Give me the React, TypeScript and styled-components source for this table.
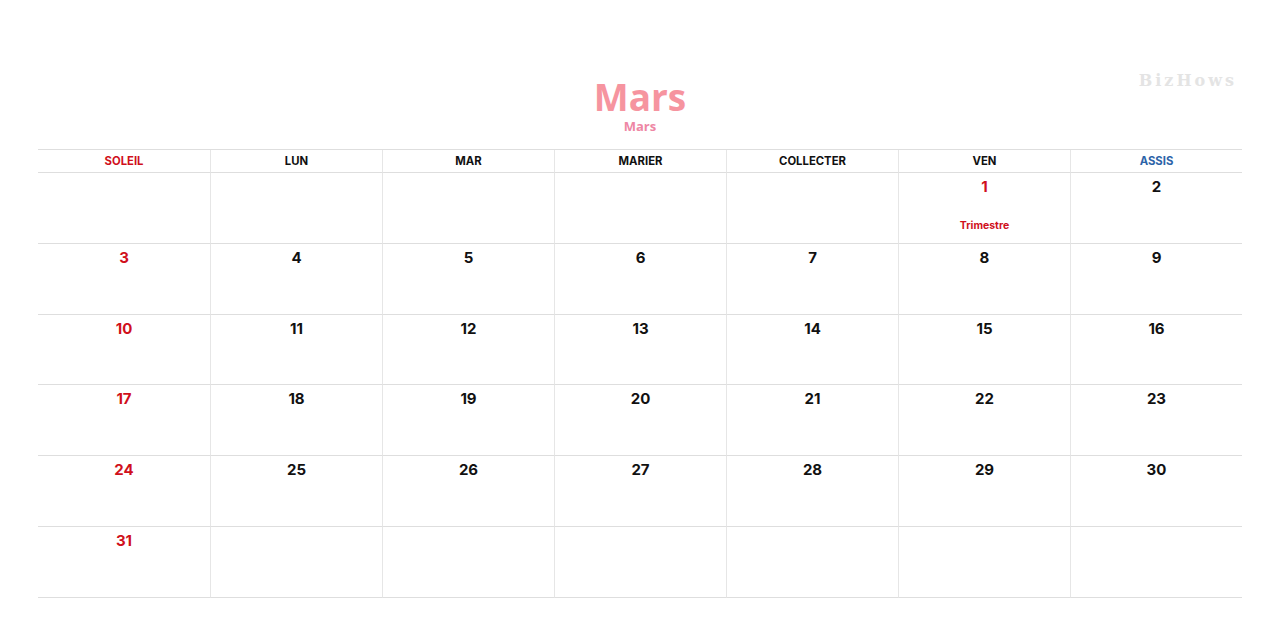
import React from 'react'
import styled, { createGlobalStyle } from 'styled-components'

const GlobalStyle = createGlobalStyle`
  body {
    margin: 0;
    background: #fff;
    font-family: 'Inter', 'Liberation Sans', sans-serif;
  }
`

const Page = styled.div`
  position: relative;
  width: 1280px;
  height: 627px;
  padding: 79px 38px 0;
  box-sizing: border-box;
`

const Watermark = styled.div`
  position: absolute;
  top: 71px;
  right: 43px;
  font-family: 'DejaVu Serif', serif;
  font-size: 16px;
  letter-spacing: 3px;
  color: #e4e4e4;
  font-weight: 700;
`

const Header = styled.div`
  display: flex;
  flex-direction: column;
  align-items: center;
  height: 70px;
`

const Title = styled.h1`
  margin: 0;
  font-family: 'Open Sans', sans-serif;
  font-size: 37px;
  line-height: 36px;
  font-weight: 700;
  color: #f6949f;
`

const Subtitle = styled.div`
  font-family: 'Open Sans', sans-serif;
  font-size: 13px;
  font-weight: 700;
  line-height: 16px;
  margin-top: 3px;
  color: #ee86a4;
`

const Grid = styled.div`
  display: grid;
  grid-template-columns: repeat(7, 1fr);
  border-top: 1px solid #dedede;
`

const HeadCell = styled.div<{ $color: string; $first: boolean }>`
  height: 23px;
  display: flex;
  align-items: center;
  justify-content: center;
  font-size: 11.3px;
  font-weight: 700;
  color: ${({ $color }) => $color};
  border-bottom: 1px solid #dedede;
  border-left: ${({ $first }) => ($first ? 'none' : '1px solid #e6e6e6')};
  box-sizing: border-box;
`

const DayCell = styled.div<{ $first: boolean }>`
  height: 70.8px;
  display: flex;
  flex-direction: column;
  align-items: center;
  padding-top: 5px;
  box-sizing: border-box;
  border-bottom: 1px solid #dedede;
  border-left: ${({ $first }) => ($first ? 'none' : '1px solid #e6e6e6')};
`

const DayNum = styled.div<{ $red: boolean }>`
  font-size: 15px;
  font-weight: 700;
  line-height: 18px;
  color: ${({ $red }) => ($red ? '#d0101c' : '#111')};
`

const Holiday = styled.div`
  margin-top: 23px;
  font-size: 10.5px;
  font-weight: 700;
  color: #d0101c;
`

const days = [
  { label: 'SOLEIL', color: '#d0101c' },
  { label: 'LUN', color: '#111' },
  { label: 'MAR', color: '#111' },
  { label: 'MARIER', color: '#111' },
  { label: 'COLLECTER', color: '#111' },
  { label: 'VEN', color: '#111' },
  { label: 'ASSIS', color: '#2d64a8' },
]

// mars commence un vendredi
const cells: (number | null)[] = [
  ...Array(5).fill(null),
  ...Array.from({ length: 31 }, (_, i) => i + 1),
  ...Array(6).fill(null),
]

function App() {
  return (
    <>
      <GlobalStyle />
      <Page>
        <Watermark>BizHows</Watermark>
        <Header>
          <Title>Mars</Title>
          <Subtitle>Mars</Subtitle>
        </Header>
        <Grid>
          {days.map((d, i) => (
            <HeadCell key={d.label} $color={d.color} $first={i === 0}>
              {d.label}
            </HeadCell>
          ))}
          {cells.map((n, i) => (
            <DayCell key={i} $first={i % 7 === 0}>
              {n !== null && <DayNum $red={i % 7 === 0 || n === 1}>{n}</DayNum>}
              {n === 1 && <Holiday>Trimestre</Holiday>}
            </DayCell>
          ))}
        </Grid>
      </Page>
    </>
  )
}

export default App
